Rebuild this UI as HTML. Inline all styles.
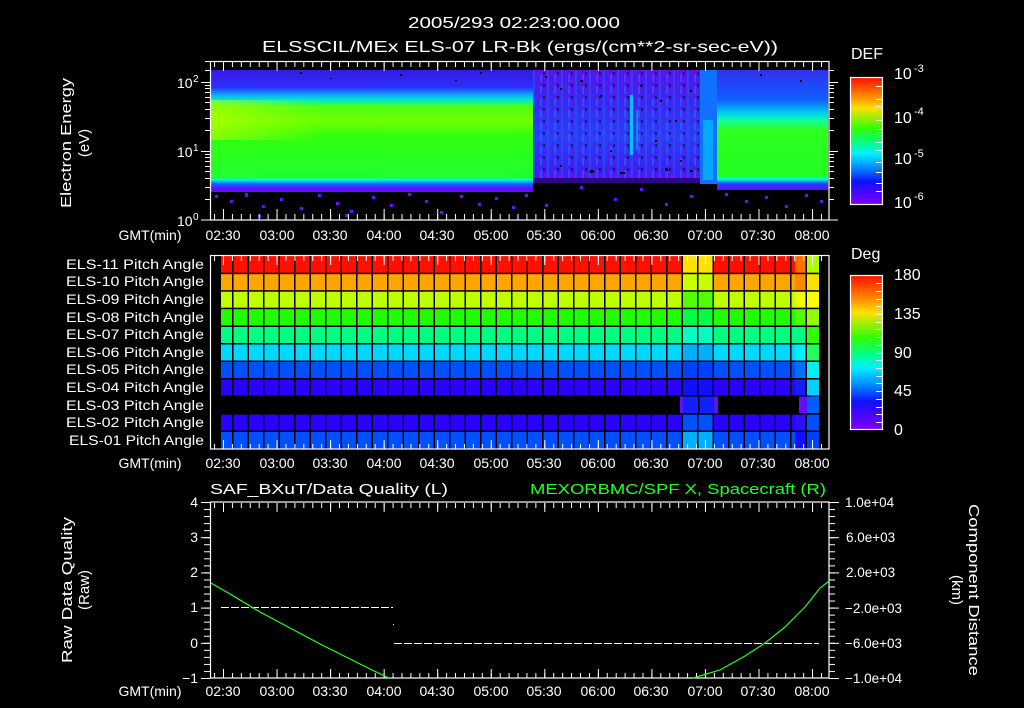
<!DOCTYPE html>
<html><head><meta charset="utf-8"><style>
html,body{margin:0;padding:0;background:#000;width:1024px;height:708px;overflow:hidden}
svg{display:block}
text{font-family:"Liberation Sans",sans-serif;fill:#fff}
</style></head><body>
<svg width="1024" height="708" viewBox="0 0 1024 708" xmlns="http://www.w3.org/2000/svg">
<defs>
<linearGradient id="gL" x1="0" y1="70" x2="0" y2="192" gradientUnits="userSpaceOnUse">
<stop offset="0" stop-color="#3a18e8"/><stop offset="0.14" stop-color="#2a30f8"/>
<stop offset="0.2" stop-color="#10a0ff"/><stop offset="0.25" stop-color="#00f0c0"/>
<stop offset="0.3" stop-color="#50ff10"/><stop offset="0.42" stop-color="#70ff00"/>
<stop offset="0.55" stop-color="#30ff10"/><stop offset="0.88" stop-color="#20ff30"/>
<stop offset="0.9" stop-color="#00ffd8"/><stop offset="0.93" stop-color="#0070ff"/>
<stop offset="0.97" stop-color="#6010ff"/><stop offset="1" stop-color="#6010ff"/>
</linearGradient>
<linearGradient id="gLx" x1="210" y1="0" x2="533" y2="0" gradientUnits="userSpaceOnUse">
<stop offset="0" stop-color="#d0ff00" stop-opacity="0.55"/><stop offset="0.35" stop-color="#b0ff00" stop-opacity="0"/>
</linearGradient>
<linearGradient id="gM" x1="0" y1="70" x2="0" y2="180" gradientUnits="userSpaceOnUse">
<stop offset="0" stop-color="#5a10e8"/><stop offset="0.3" stop-color="#3a28f0"/>
<stop offset="0.6" stop-color="#2a40f8"/><stop offset="0.9" stop-color="#3a20f0"/><stop offset="1" stop-color="#6010ff"/>
</linearGradient>
<linearGradient id="gR" x1="0" y1="70" x2="0" y2="190" gradientUnits="userSpaceOnUse">
<stop offset="0" stop-color="#3030f0"/><stop offset="0.25" stop-color="#1060ff"/>
<stop offset="0.36" stop-color="#00d0f0"/><stop offset="0.42" stop-color="#10ffa0"/>
<stop offset="0.5" stop-color="#30ff20"/><stop offset="0.88" stop-color="#20ff20"/>
<stop offset="0.91" stop-color="#00ffd0"/><stop offset="0.95" stop-color="#2040ff"/><stop offset="1" stop-color="#6010ff"/>
</linearGradient>
<linearGradient id="gDEF" x1="0" y1="0" x2="0" y2="1">
<stop offset="0" stop-color="#ff1000"/><stop offset="0.12" stop-color="#ff7000"/>
<stop offset="0.24" stop-color="#ffe000"/><stop offset="0.4" stop-color="#30ff00"/>
<stop offset="0.52" stop-color="#00ff90"/><stop offset="0.6" stop-color="#00f0ff"/>
<stop offset="0.72" stop-color="#0080ff"/><stop offset="0.82" stop-color="#1010ff"/>
<stop offset="1" stop-color="#8000ff"/>
</linearGradient>
<pattern id="noise" x="533" y="70" width="14" height="12" patternUnits="userSpaceOnUse">
<rect x="0" y="0" width="2" height="12" fill="#1060ff" opacity="0.6"/>
<rect x="4" y="0" width="2" height="6" fill="#7010f0" opacity="0.7"/>
<rect x="7" y="4" width="2" height="8" fill="#10a0ff" opacity="0.35"/>
<rect x="10" y="2" width="2" height="3" fill="#000" opacity="0.5"/>
<rect x="12" y="7" width="2" height="5" fill="#6a10ff" opacity="0.7"/>
</pattern>
<pattern id="tmin" x="223" y="0" width="8.925" height="708" patternUnits="userSpaceOnUse"><rect x="0" y="0" width="1" height="708" fill="#fff"/></pattern>
<pattern id="tmaj" x="223" y="0" width="53.55" height="708" patternUnits="userSpaceOnUse"><rect x="0" y="0" width="1" height="708" fill="#fff"/></pattern>
<pattern id="cgrid" x="232" y="0" width="15.5" height="708" patternUnits="userSpaceOnUse"><rect x="0" y="0" width="1.5" height="708" fill="#000"/></pattern>
<pattern id="ymin" x="0" y="502" width="10" height="7.04" patternUnits="userSpaceOnUse"><rect x="0" y="0" width="10" height="1" fill="#fff"/></pattern>
<pattern id="ymaj" x="0" y="502" width="10" height="35.2" patternUnits="userSpaceOnUse"><rect x="0" y="0" width="10" height="1" fill="#fff"/></pattern>
</defs>

<text x="514" y="28" font-size="16" text-anchor="middle" textLength="212" lengthAdjust="spacingAndGlyphs">2005/293 02:23:00.000</text>
<text x="520" y="52" font-size="16" text-anchor="middle" textLength="516" lengthAdjust="spacingAndGlyphs">ELSSCIL/MEx ELS-07 LR-Bk  (ergs/(cm**2-sr-sec-eV))</text>

<!-- Panel 1 -->
<rect x="211" y="70" width="322" height="122" fill="url(#gL)"/>
<rect x="211" y="100" width="322" height="40" fill="url(#gLx)"/>
<rect x="533" y="70" width="168" height="108" fill="url(#gM)"/>
<rect x="533" y="70" width="168" height="108" fill="url(#noise)"/>
<rect x="533" y="178" width="168" height="5" fill="#6010ff" opacity="0.5"/>
<rect x="630" y="95" width="3" height="60" fill="#00e0ff" opacity="0.8"/>
<rect x="636" y="110" width="2" height="40" fill="#10c0ff" opacity="0.5"/>
<rect x="700" y="70" width="17" height="114" fill="#1070ff"/>
<rect x="703" y="120" width="10" height="60" fill="#00c0ff" opacity="0.7"/>
<rect x="717" y="70" width="111" height="120" fill="url(#gR)"/>
<g fill="#000">
<rect x="300" y="72" width="2" height="2"/><rect x="330" y="78" width="2" height="1"/><rect x="400" y="74" width="2" height="2"/>
<rect x="455" y="80" width="2" height="1"/><rect x="480" y="72" width="2" height="2"/><rect x="545" y="76" width="2" height="2"/>
<rect x="560" y="88" width="2" height="2"/><rect x="580" y="80" width="3" height="2"/><rect x="600" y="95" width="2" height="2"/>
<rect x="640" y="85" width="2" height="2"/><rect x="660" y="100" width="2" height="2"/><rect x="675" y="120" width="2" height="2"/>
<rect x="690" y="90" width="2" height="2"/><rect x="655" y="140" width="2" height="2"/><rect x="680" y="160" width="2" height="2"/>
<rect x="610" y="150" width="2" height="2"/><rect x="690" y="170" width="3" height="2"/><rect x="560" y="165" width="2" height="2"/>
<rect x="760" y="74" width="2" height="2"/><rect x="800" y="80" width="2" height="2"/>
<rect x="590" y="170" width="4" height="3"/><rect x="620" y="172" width="5" height="2"/><rect x="665" y="168" width="3" height="3"/>
</g>
<g fill="#6a10ff">
<rect x="215" y="195" width="3" height="3"/><rect x="230" y="200" width="3" height="3"/><rect x="245" y="193" width="3" height="4"/>
<rect x="262" y="205" width="3" height="3"/><rect x="280" y="198" width="3" height="3"/><rect x="300" y="207" width="3" height="3"/>
<rect x="318" y="194" width="3" height="3"/><rect x="336" y="202" width="3" height="3"/><rect x="350" y="210" width="3" height="3"/>
<rect x="372" y="196" width="3" height="3"/><rect x="390" y="204" width="3" height="3"/><rect x="408" y="193" width="3" height="3"/>
<rect x="425" y="200" width="3" height="3"/><rect x="440" y="211" width="3" height="3"/><rect x="460" y="195" width="3" height="3"/>
<rect x="478" y="203" width="3" height="3"/><rect x="495" y="197" width="3" height="3"/><rect x="512" y="206" width="3" height="3"/>
<rect x="525" y="194" width="3" height="3"/><rect x="545" y="204" width="3" height="3"/><rect x="580" y="186" width="3" height="3"/>
<rect x="614" y="198" width="3" height="3"/><rect x="640" y="188" width="3" height="3"/><rect x="665" y="203" width="3" height="3"/>
<rect x="690" y="195" width="3" height="3"/><rect x="725" y="193" width="3" height="3"/><rect x="745" y="200" width="3" height="3"/>
<rect x="765" y="196" width="3" height="3"/><rect x="785" y="205" width="3" height="3"/><rect x="805" y="194" width="3" height="3"/>
<rect x="820" y="200" width="3" height="3"/><rect x="258" y="215" width="3" height="3"/><rect x="345" y="214" width="3" height="3"/>
</g>
<rect x="210.5" y="61.5" width="618.5" height="158.5" fill="none" stroke="#fff" stroke-width="1.2"/>
<rect x="211" y="62" width="617" height="5" fill="url(#tmin)"/>
<rect x="211" y="62" width="617" height="9" fill="url(#tmaj)"/>
<rect x="211" y="214" width="617" height="6" fill="url(#tmin)"/>
<rect x="211" y="209" width="617" height="11" fill="url(#tmaj)"/>
<g stroke="#fff" stroke-width="1">
<path d="M201 82.5H210M201 151.5H210M201 220H210M829 82.5H838M829 151.5H838M829 220H838"/>
<path d="M205 199.5H210M205 187.5H210M205 178.5H210M205 171.5H210M205 166.5H210M205 161.5H210M205 157.5H210M205 154.5H210
M205 130.5H210M205 118.5H210M205 109.5H210M205 102.5H210M205 97.5H210M205 92.5H210M205 88.5H210M205 85.5H210
M205 61.5H210M205 70.5H210
M829 199.5H834M829 187.5H834M829 178.5H834M829 171.5H834M829 166.5H834M829 161.5H834M829 157.5H834M829 154.5H834
M829 130.5H834M829 118.5H834M829 109.5H834M829 102.5H834M829 97.5H834M829 92.5H834M829 88.5H834M829 85.5H834M829 70.5H834"/>
</g>
<text x="177" y="88" font-size="14">10</text><text x="193" y="82" font-size="10">2</text>
<text x="177" y="157" font-size="14">10</text><text x="193" y="151" font-size="10">1</text>
<text x="177" y="226" font-size="14">10</text><text x="193" y="220" font-size="10">0</text>
<text transform="translate(71,143) rotate(-90)" font-size="15" text-anchor="middle" textLength="130" lengthAdjust="spacingAndGlyphs">Electron Energy</text>
<text transform="translate(89,143) rotate(-90)" font-size="15" text-anchor="middle">(eV)</text>

<g font-size="14" text-anchor="middle">
<text x="150" y="240">GMT(min)</text>
<text x="223" y="240">02:30</text><text x="277" y="240">03:00</text><text x="330" y="240">03:30</text><text x="384" y="240">04:00</text>
<text x="437" y="240">04:30</text><text x="491" y="240">05:00</text><text x="544" y="240">05:30</text><text x="598" y="240">06:00</text>
<text x="651" y="240">06:30</text><text x="705" y="240">07:00</text><text x="758" y="240">07:30</text><text x="812" y="240">08:00</text>
</g>

<text x="851" y="59" font-size="16">DEF</text>
<rect x="850.5" y="77.5" width="32" height="127" fill="url(#gDEF)" stroke="#fff" stroke-width="1.2"/>
<g stroke="#fff"><path d="M876 86.5H883M876 99.5H883M876 106.5H883M876 120.5H883M876 129.5H883M876 142.5H883M876 150.5H883M876 162.5H883M876 172.5H883M876 183.5H883M876 191.5H883"/></g>
<g font-size="16"><text x="894" y="79">10</text><text x="914" y="72" font-size="11">-3</text>
<text x="894" y="123">10</text><text x="914" y="115" font-size="11">-4</text>
<text x="894" y="164">10</text><text x="914" y="157" font-size="11">-5</text>
<text x="894" y="208">10</text><text x="914" y="200" font-size="11">-6</text></g>

<!-- Panel 2 -->
<g>
<rect x="221" y="256" width="598" height="17.5" fill="#ff1000"/>
<rect x="221" y="273.5" width="598" height="17.5" fill="#ffa500"/>
<rect x="221" y="291" width="598" height="17.5" fill="#c0ff00"/>
<rect x="221" y="308.5" width="598" height="17.5" fill="#20ff00"/>
<rect x="221" y="326" width="598" height="17.5" fill="#00ff80"/>
<rect x="221" y="343.5" width="598" height="17.5" fill="#00d8ff"/>
<rect x="221" y="361" width="598" height="17.5" fill="#0050ff"/>
<rect x="221" y="378.5" width="598" height="17.5" fill="#2a00ff"/>
<rect x="221" y="413.5" width="598" height="17.5" fill="#2a00ff"/>
<rect x="221" y="431" width="598" height="18" fill="#0050ff"/>
<rect x="683" y="256" width="31" height="17.5" fill="#ffe000"/>
<rect x="683" y="273.5" width="31" height="17.5" fill="#c8ff00"/>
<rect x="683" y="291" width="31" height="17.5" fill="#50ff00"/>
<rect x="683" y="308.5" width="31" height="17.5" fill="#00ff40"/>
<rect x="683" y="326" width="31" height="17.5" fill="#00ffc0"/>
<rect x="683" y="343.5" width="31" height="17.5" fill="#00b0ff"/>
<rect x="683" y="361" width="31" height="17.5" fill="#0040ff"/>
<rect x="683" y="378.5" width="31" height="17.5" fill="#1010ff"/>
<rect x="683" y="413.5" width="31" height="17.5" fill="#0050ff"/>
<rect x="683" y="431" width="31" height="18" fill="#00b0ff"/>
<rect x="795" y="256" width="12" height="17.5" fill="#ff7000"/><rect x="807" y="256" width="12" height="17.5" fill="#b0ff00"/>
<rect x="795" y="273.5" width="12" height="17.5" fill="#ff8800"/><rect x="807" y="273.5" width="12" height="17.5" fill="#ffe000"/>
<rect x="795" y="291" width="12" height="17.5" fill="#f0ff00"/><rect x="807" y="291" width="12" height="17.5" fill="#ffff00"/>
<rect x="795" y="308.5" width="12" height="17.5" fill="#50ff00"/><rect x="807" y="308.5" width="12" height="17.5" fill="#90ff00"/>
<rect x="795" y="326" width="12" height="17.5" fill="#00ff80"/><rect x="807" y="326" width="12" height="17.5" fill="#30ff00"/>
<rect x="795" y="343.5" width="12" height="17.5" fill="#00f0ff"/><rect x="807" y="343.5" width="12" height="17.5" fill="#20ff60"/>
<rect x="795" y="361" width="12" height="17.5" fill="#0070ff"/><rect x="807" y="361" width="12" height="17.5" fill="#00f0f0"/>
<rect x="795" y="378.5" width="12" height="17.5" fill="#1020ff"/><rect x="807" y="378.5" width="12" height="17.5" fill="#00d0ff"/>
<rect x="795" y="413.5" width="12" height="17.5" fill="#2a10ff"/><rect x="807" y="413.5" width="12" height="17.5" fill="#0050ff"/>
<rect x="795" y="431" width="12" height="18" fill="#1010ff"/><rect x="807" y="431" width="12" height="18" fill="#0040ff"/>
<rect x="221" y="256" width="598" height="193" fill="url(#cgrid)"/>
<g fill="#000"><rect x="221" y="272.7" width="598" height="1.5"/><rect x="221" y="290.2" width="598" height="1.5"/>
<rect x="221" y="307.7" width="598" height="1.5"/><rect x="221" y="325.5" width="598" height="1.5"/>
<rect x="221" y="343" width="598" height="1.5"/><rect x="221" y="360.5" width="598" height="1.5"/>
<rect x="221" y="378" width="598" height="1.5"/><rect x="221" y="395.5" width="598" height="19"/>
<rect x="221" y="413.2" width="598" height="1.5"/><rect x="221" y="430.5" width="598" height="1.5"/></g>
<rect x="680" y="396.5" width="38" height="16.5" fill="#6010ff"/>
<rect x="683" y="396.5" width="31" height="16.5" fill="#1020ff"/>
<rect x="698" y="396" width="1.5" height="17.5" fill="#000"/>
<rect x="799" y="396.5" width="8" height="16.5" fill="#6010ff"/><rect x="807" y="396.5" width="12" height="16.5" fill="#0060ff"/>
</g>
<rect x="210.5" y="255.5" width="618.5" height="193.5" fill="none" stroke="#fff" stroke-width="1.2"/>
<rect x="211" y="256" width="617" height="5" fill="url(#tmin)"/>
<rect x="211" y="256" width="617" height="9" fill="url(#tmaj)"/>
<rect x="211" y="444" width="617" height="5" fill="url(#tmin)"/>
<rect x="211" y="440" width="617" height="9" fill="url(#tmaj)"/>
<g font-size="13.5" text-anchor="end">
<text x="204" y="269" textLength="138" lengthAdjust="spacingAndGlyphs">ELS-11 Pitch Angle</text>
<text x="204" y="286" textLength="138" lengthAdjust="spacingAndGlyphs">ELS-10 Pitch Angle</text>
<text x="204" y="304" textLength="138" lengthAdjust="spacingAndGlyphs">ELS-09 Pitch Angle</text>
<text x="204" y="322" textLength="138" lengthAdjust="spacingAndGlyphs">ELS-08 Pitch Angle</text>
<text x="204" y="339" textLength="138" lengthAdjust="spacingAndGlyphs">ELS-07 Pitch Angle</text>
<text x="204" y="357" textLength="138" lengthAdjust="spacingAndGlyphs">ELS-06 Pitch Angle</text>
<text x="204" y="374" textLength="138" lengthAdjust="spacingAndGlyphs">ELS-05 Pitch Angle</text>
<text x="204" y="392" textLength="138" lengthAdjust="spacingAndGlyphs">ELS-04 Pitch Angle</text>
<text x="204" y="410" textLength="138" lengthAdjust="spacingAndGlyphs">ELS-03 Pitch Angle</text>
<text x="204" y="427" textLength="138" lengthAdjust="spacingAndGlyphs">ELS-02 Pitch Angle</text>
<text x="204" y="445" textLength="135" lengthAdjust="spacingAndGlyphs">ELS-01 Pitch Angle</text>
</g>
<g font-size="14" text-anchor="middle">
<text x="150" y="468">GMT(min)</text>
<text x="223" y="468">02:30</text><text x="277" y="468">03:00</text><text x="330" y="468">03:30</text><text x="384" y="468">04:00</text>
<text x="437" y="468">04:30</text><text x="491" y="468">05:00</text><text x="544" y="468">05:30</text><text x="598" y="468">06:00</text>
<text x="651" y="468">06:30</text><text x="705" y="468">07:00</text><text x="758" y="468">07:30</text><text x="812" y="468">08:00</text>
</g>
<text x="851" y="259" font-size="16">Deg</text>
<rect x="850.5" y="275.5" width="32" height="154" fill="url(#gDEF)" stroke="#fff" stroke-width="1.2"/>
<g stroke="#fff"><path d="M876 283.5H883M876 291.5H883M876 299.5H883M876 306.5H883M876 314.5H883M876 322.5H883M876 329.5H883M876 337.5H883M876 345.5H883M876 353.5H883M876 360.5H883M876 368.5H883M876 376.5H883M876 383.5H883M876 391.5H883M876 399.5H883M876 407.5H883M876 414.5H883M876 422.5H883"/></g>
<g font-size="16"><text x="894" y="280">180</text><text x="894" y="319">135</text><text x="894" y="358">90</text><text x="894" y="396">45</text><text x="894" y="435">0</text></g>

<!-- Panel 3 -->
<text x="210" y="494" font-size="15" textLength="238" lengthAdjust="spacingAndGlyphs">SAF_BXuT/Data Quality (L)</text>
<text x="530" y="494" font-size="15" style="fill:#20ff20" textLength="296" lengthAdjust="spacingAndGlyphs">MEXORBMC/SPF X, Spacecraft (R)</text>
<rect x="210.5" y="502" width="618.5" height="176" fill="none" stroke="#fff" stroke-width="1.2"/>
<rect x="211" y="503" width="617" height="5" fill="url(#tmin)"/>
<rect x="211" y="503" width="617" height="9" fill="url(#tmaj)"/>
<rect x="211" y="673" width="617" height="5" fill="url(#tmin)"/>
<rect x="211" y="669" width="617" height="9" fill="url(#tmaj)"/>
<rect x="204" y="502" width="6" height="177" fill="url(#ymin)"/>
<rect x="201" y="502" width="9" height="177" fill="url(#ymaj)"/>
<rect x="829" y="502" width="6" height="177" fill="url(#ymin)"/>
<rect x="829" y="502" width="10" height="177" fill="url(#ymaj)"/>
<g font-size="14" text-anchor="end">
<text x="198" y="507">4</text><text x="198" y="542">3</text><text x="198" y="577">2</text>
<text x="198" y="612">1</text><text x="198" y="648">0</text><text x="198" y="683">−1</text>
</g>
<g font-size="13.5">
<text x="845" y="507">1.0e+04</text><text x="846" y="542">6.0e+03</text><text x="846" y="577">2.0e+03</text>
<text x="845" y="613">−2.0e+03</text><text x="845" y="648">−6.0e+03</text><text x="845" y="683">−1.0e+04</text>
</g>
<text transform="translate(72,590) rotate(-90)" font-size="15" text-anchor="middle" textLength="146" lengthAdjust="spacingAndGlyphs">Raw Data Quality</text>
<text transform="translate(89,590) rotate(-90)" font-size="15" text-anchor="middle">(Raw)</text>
<text transform="translate(969,590) rotate(90)" font-size="15" text-anchor="middle" textLength="172" lengthAdjust="spacingAndGlyphs">Component Distance</text>
<text transform="translate(952,590) rotate(90)" font-size="15" text-anchor="middle">(km)</text>
<path d="M221 607.5H393" stroke="#fff" stroke-width="1" stroke-dasharray="8,2"/>
<path d="M394 643.5H819" stroke="#fff" stroke-width="1" stroke-dasharray="8,2"/>
<rect x="393" y="624" width="1" height="1" fill="#fff"/>
<polyline points="211,583 230,594 260,612 290,628 320,644 350,659 370,669 389,678" fill="none" stroke="#20ff20" stroke-width="1.2"/>
<polyline points="693,678 720,670 745,656 765,643 785,627 805,607 820,588 829,581" fill="none" stroke="#20ff20" stroke-width="1.2"/>
<g font-size="14" text-anchor="middle">
<text x="150" y="696">GMT(min)</text>
<text x="223" y="696">02:30</text><text x="277" y="696">03:00</text><text x="330" y="696">03:30</text><text x="384" y="696">04:00</text>
<text x="437" y="696">04:30</text><text x="491" y="696">05:00</text><text x="544" y="696">05:30</text><text x="598" y="696">06:00</text>
<text x="651" y="696">06:30</text><text x="705" y="696">07:00</text><text x="758" y="696">07:30</text><text x="812" y="696">08:00</text>
</g>
</svg>
</body></html>
